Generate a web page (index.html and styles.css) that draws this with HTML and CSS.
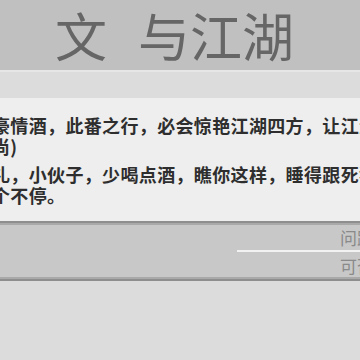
FILE: index.html
```html
<!DOCTYPE html>
<html>
<head>
    <title>文与江湖</title>
    <link rel="stylesheet" href="styles.css">
</head>
<body>
    <div class="header">
        <h1><span class="first">文</span>与江湖</h1>
    </div>
    <div class="dialog">
        <div class="dialog-bar"></div>
        <div class="dialog-text">
            <p>
                <span class="line">豪情酒，此番之行，必会惊艳江湖四方，让江湖中人刮目相看。</span>
                <span class="line">尚)</span>
            </p>
            <p>
                <span class="line">礼，小伙子，少喝点酒，瞧你这样，睡得跟死猪一样，鼾声响</span>
                <span class="line">个不停。</span>
            </p>
        </div>
    </div>
    <div class="menu">
        <div class="menu-item">问路</div>
        <div class="menu-sep"></div>
        <div class="menu-item">可否</div>
    </div>
    <div class="rest"></div>
</body>
</html>
```

FILE: styles.css
```css
html, body {
    margin: 0;
    padding: 0;
    height: 100%;
}
body {
    font-family: "Noto Sans CJK SC", "Noto Sans", sans-serif;
    background: #dcdcdc;
    overflow: hidden;
    display: flex;
    flex-direction: column;
}
.header {
    height: 70px;
    background: #c0c0c0;
    display: flex;
    align-items: center;
    padding-left: 55px;
    flex-shrink: 0;
}
.header h1 {
    margin: 0;
    font-size: 52px;
    font-weight: normal;
    line-height: 1;
    color: #666666;
    white-space: nowrap;
}
.header .first {
    margin-right: 31px;
}
.dialog {
    border-top: 2px solid #e6e6e6;
    flex-shrink: 0;
}
.dialog-bar {
    height: 26px;
    background: #dcdcdc;
}
.dialog-text {
    background: #eeeeee;
    padding: 17px 0 15px;
    color: #2e2e2e;
    font-size: 18px;
    font-weight: bold;
    letter-spacing: 0.35px;
    line-height: 21px;
}
.dialog-text p {
    margin: 0 0 7px -8px;
    white-space: nowrap;
}
.dialog-text p:last-child {
    margin-bottom: 0;
}
.line {
    display: block;
}
.menu {
    background: #c8c8c8;
    border-top: 2px solid #8e8e8e;
    border-bottom: 2px solid #8e8e8e;
    box-shadow: inset 0 2px 0 #a9a9a9, inset 0 -2px 0 #a9a9a9;
    padding: 4px 0 3px;
    flex-shrink: 0;
}
.menu-item {
    padding-left: 340px;
    font-size: 17px;
    line-height: 21px;
    color: #8a8a8a;
    white-space: nowrap;
}
.menu-sep {
    height: 2px;
    background: #f2f2f2;
    margin: 2px 0 3px 237px;
}
.rest {
    flex: 1;
    background: #dcdcdc;
}
```
